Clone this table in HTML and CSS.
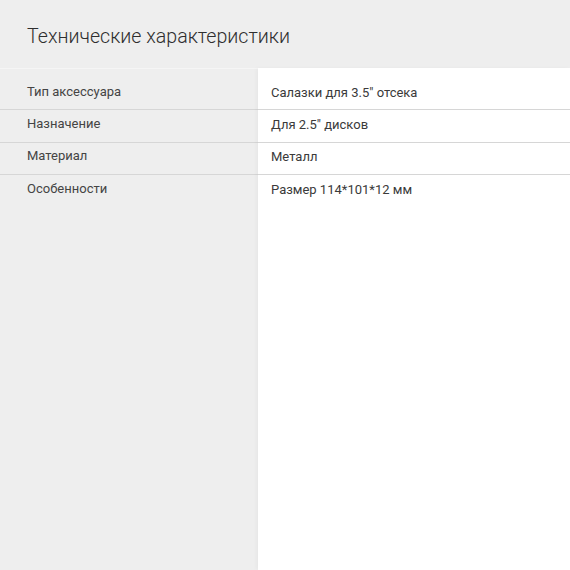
FILE: index.html
```html
<!DOCTYPE html>
<html lang="ru">
<head>
<meta charset="utf-8">
<title>Технические характеристики</title>
<link rel="stylesheet" href="styles.css">
</head>
<body>
<div class="page">
  <h1 class="title">Технические характеристики</h1>
  <div class="specs">
    <div class="col col-label">
      <div class="cell first">Тип аксессуара</div>
      <div class="cell">Назначение</div>
      <div class="cell">Материал</div>
      <div class="cell last">Особенности</div>
    </div>
    <div class="col col-value">
      <div class="cell first">Салазки для 3.5" отсека</div>
      <div class="cell">Для 2.5" дисков</div>
      <div class="cell">Металл</div>
      <div class="cell last">Размер 114*101*12 мм</div>
    </div>
  </div>
</div>
</body>
</html>
```

FILE: styles.css
```css
html, body {
  margin: 0;
  padding: 0;
  height: 100%;
}
body {
  background: #eeeeee;
  font-family: Roboto, "Liberation Sans", Arial, sans-serif;
  color: #333;
}
.page {
  display: flex;
  flex-direction: column;
  min-height: 100vh;
}
.title {
  margin: 0;
  padding: 25px 27px 19px;
  font-size: 19.6px;
  line-height: 24px;
  font-weight: 300;
  color: #2e2e2e;
}
.specs {
  flex: 1;
  display: grid;
  grid-template-columns: 258px 1fr;
}
.col {
  display: flex;
  flex-direction: column;
}
.col-label {
  background: #eeeeee;
  border-top: 1px solid #f5f5f5;
}
.col-value {
  background: #ffffff;
  box-shadow: -2px 0 4px rgba(0,0,0,0.03);
}
.cell {
  font-size: 13px;
  line-height: 16px;
  padding: 5.5px 13px 10px;
  border-bottom: 1px solid #d6d6d6;
  color: #3a3a3a;
}
.col-label .cell {
  padding-left: 27px;
  color: #444;
}
.col-value .cell {
  padding-top: 6.5px;
  padding-bottom: 9px;
}
.col-label .cell.first {
  padding-top: 15px;
  padding-bottom: 9px;
}
.col-value .cell.first {
  padding-top: 16.5px;
  padding-bottom: 8.5px;
}
.cell.last {
  border-bottom: none;
}
```
